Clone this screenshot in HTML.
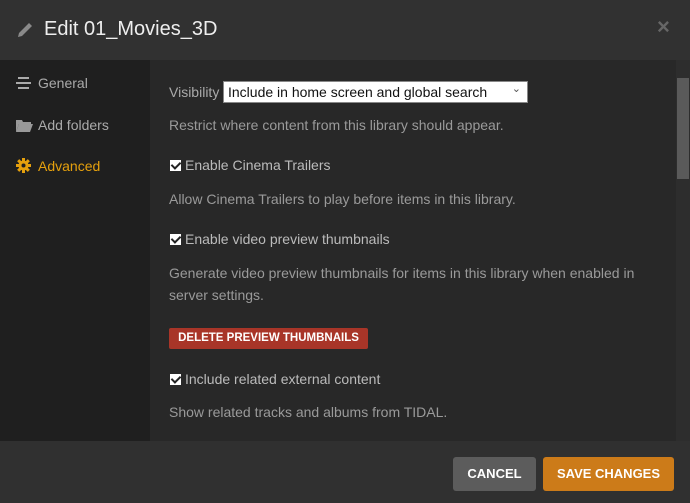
<!DOCTYPE html>
<html><head><meta charset="utf-8"><style>
*{margin:0;padding:0;box-sizing:border-box}
body{width:690px;height:503px;overflow:hidden;background:#282828;font-family:"Liberation Sans",sans-serif;position:relative;color:#a8a8a8}
.hdr{position:absolute;left:0;top:0;width:690px;height:60px;background:#313131}
.hdr .t{position:absolute;left:44px;top:18px;font-size:20px;color:#eee}
.hdr .x{position:absolute;left:657px;top:14px;font-size:22px;font-weight:bold;color:#666}
.side{position:absolute;left:0;top:60px;width:150px;height:381px;background:#1f1f1f}
.si{position:absolute;left:38px;font-size:14px;color:#aaa}
.ic{position:absolute;left:16px}
.main{position:absolute;left:150px;top:60px;width:526px;height:381px;background:#282828}
.sb{position:absolute;left:676px;top:60px;width:14px;height:381px;background:#2d2d2d}
.thumb{position:absolute;left:677px;top:78px;width:12px;height:101px;background:#5a5a5a}
.p{position:absolute;left:169px;font-size:14px;color:#9a9a9a;line-height:22px}
.cb{position:absolute;left:170px;width:11px;height:11px;background:#fff}
.cb:after{content:"";position:absolute;left:3px;top:0px;width:4px;height:7px;border:solid #222;border-width:0 2px 2px 0;transform:rotate(45deg)}
.lbl{position:absolute;left:185px;font-size:14px;color:#bbb}
.sel{position:absolute;left:223px;top:81px;width:305px;height:22px;background:#fff;border:1px solid #888;color:#111;font-size:14px;padding:2px 4px}
.del{position:absolute;left:169px;top:328px;width:199px;height:21px;background:#a83528;border-radius:2px;color:#fff;font-weight:bold;font-size:11.5px;text-align:center;line-height:21px}
.foot{position:absolute;left:0;top:441px;width:690px;height:62px;background:#303030}
.btn{position:absolute;top:457px;height:34px;border-radius:3px;color:#fff;font-weight:bold;font-size:13px;text-align:center;line-height:34px}
</style></head><body>
<div class="hdr">
<svg style="position:absolute;left:16px;top:21px" width="18" height="18" viewBox="0 0 18 18"><path d="M2 16 L3 12 L13 2 L16 5 L6 15 Z" fill="#8a8a8a"/></svg>
<div class="t">Edit 01_Movies_3D</div>
<div class="x">×</div>
</div>
<div class="side">
<svg class="ic" style="top:17px" width="15" height="12"><rect x="2" y="0" width="11" height="2" fill="#aaa"/><rect x="0" y="5" width="15" height="2" fill="#aaa"/><rect x="2" y="10" width="11" height="2" fill="#aaa"/></svg>
<div class="si" style="top:15px">General</div>
<svg class="ic" style="top:59px" width="17" height="13"><path d="M0 1h6l1 2h8v2H3L0 13Z" fill="#999"/><path d="M3 5h14l-3 8H0Z" fill="#999"/></svg>
<div class="si" style="top:57px">Add folders</div>
<svg class="ic" style="top:98px" width="15" height="15" viewBox="0 0 15 15"><circle cx="7.5" cy="7.5" r="5" fill="#e5a00d"/><g stroke="#e5a00d" stroke-width="3"><line x1="7.5" y1="0" x2="7.5" y2="15"/><line x1="0" y1="7.5" x2="15" y2="7.5"/><line x1="2.2" y1="2.2" x2="12.8" y2="12.8"/><line x1="12.8" y1="2.2" x2="2.2" y2="12.8"/></g><circle cx="7.5" cy="7.5" r="2" fill="#1f1f1f"/></svg>
<div class="si" style="top:98px;color:#e5a00d">Advanced</div>
</div>
<div class="main"></div>
<div class="sb"></div><div class="thumb"></div>
<div class="p" style="top:81px;color:#aaa">Visibility</div>
<div class="sel">Include in home screen and global search<span style="position:absolute;right:6px;top:0;font-size:11px;color:#555">⌄</span></div>
<div class="p" style="top:114px">Restrict where content from this library should appear.</div>
<div class="cb" style="top:160px"></div><div class="lbl" style="top:157px">Enable Cinema Trailers</div>
<div class="p" style="top:188px">Allow Cinema Trailers to play before items in this library.</div>
<div class="cb" style="top:234px"></div><div class="lbl" style="top:231px">Enable video preview thumbnails</div>
<div class="p" style="top:262px">Generate video preview thumbnails for items in this library when enabled in<br>server settings.</div>
<div class="del">DELETE PREVIEW THUMBNAILS</div>
<div class="cb" style="top:374px"></div><div class="lbl" style="top:371px">Include related external content</div>
<div class="p" style="top:401px">Show related tracks and albums from TIDAL.</div>
<div class="foot"></div>
<div class="btn" style="left:453px;width:83px;background:#5c5c5c">CANCEL</div>
<div class="btn" style="left:543px;width:131px;background:#cc7b19">SAVE CHANGES</div>
</body></html>
